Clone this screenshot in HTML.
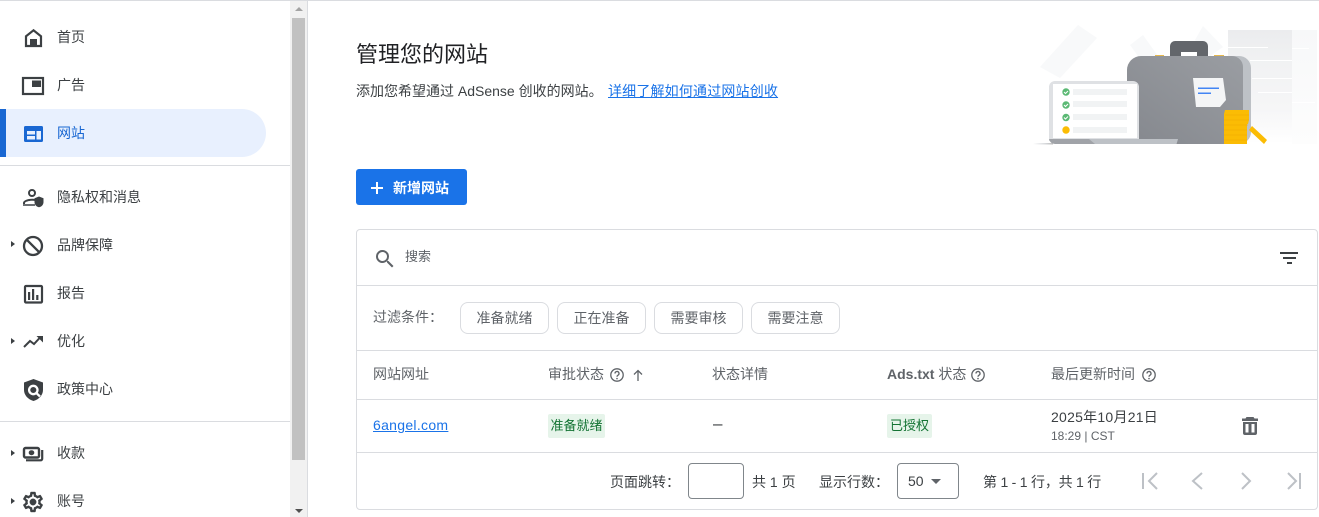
<!DOCTYPE html>
<html lang="zh"><head><meta charset="utf-8"><title>网站</title>
<style>
html,body{margin:0;padding:0;background:#fff}
body{width:1319px;height:517px;overflow:hidden;position:relative;font-family:"Liberation Sans","Noto Sans CJK SC",sans-serif;color:#3c4043;font-size:14px}
.a{position:absolute;white-space:nowrap}
.nav{left:57px;font-size:14px;line-height:20px;color:#3c4043}
.hl{background:#dadce0}
svg{position:absolute;overflow:visible}
.chip{position:absolute;top:302px;height:32px;box-sizing:border-box;border:1px solid #dadce0;border-radius:8px;font-size:14px;line-height:30px;text-align:center;color:#5f6368}
.th{top:364px;line-height:20px;font-size:14px;color:#5f6368}
.p{top:472px;font-size:14px;line-height:20px;color:#3c4043}
.tri{position:absolute;left:11px;width:0;height:0;border-left:4px solid #3c4043;border-top:3.5px solid transparent;border-bottom:3.5px solid transparent}
</style></head><body>
<div class="a hl" style="left:0;top:0;width:1319px;height:1px"></div>

<!-- sidebar -->
<div class="a" style="left:0;top:109px;width:266px;height:48px;background:#e8f0fe;border-radius:0 24px 24px 0"></div>
<div class="a" style="left:0;top:109px;width:6px;height:48px;background:#1967d2"></div>
<div class="a hl" style="left:0;top:165px;width:290px;height:1px"></div>
<div class="a hl" style="left:0;top:421px;width:290px;height:1px"></div>
<div class="a" style="left:290px;top:1px;width:17px;height:516px;background:#f1f1f1"></div>
<div class="a" style="left:292px;top:18px;width:13px;height:442px;background:#c1c1c1"></div>
<div class="a" style="left:307px;top:0;width:1px;height:517px;background:#dadce0"></div>
<div class="a" style="left:295px;top:7px;width:0;height:0;border-left:4px solid transparent;border-right:4px solid transparent;border-bottom:4px solid #a3a3a3"></div>
<div class="a" style="left:295px;top:509px;width:0;height:0;border-left:4px solid transparent;border-right:4px solid transparent;border-top:4px solid #505050"></div>

<svg style="left:21px;top:25px" width="24" height="24" viewBox="0 0 24 24"><path d="M12.500 5.300 5 11.300V21h15v-9.700z" fill="none" stroke="#3c4043" stroke-width="2.200"/><rect x="9" y="14" width="7" height="7" fill="#3c4043"/></svg>
<svg style="left:21px;top:73px" width="24" height="24" viewBox="0 0 24 24"><rect x="2" y="5" width="20" height="16" fill="none" stroke="#3c4043" stroke-width="2.200"/><rect x="11" y="7.500" width="9" height="6.500" fill="#3c4043"/></svg>
<svg style="left:21px;top:121px" width="24" height="24" viewBox="0 0 24 24" fill="#1967d2"><path fill-rule="evenodd" d="M4.500 5h16A1.500 1.500 0 0 1 22 6.500v13a1.500 1.500 0 0 1-1.500 1.500h-16A1.500 1.500 0 0 1 3 19.500v-13A1.500 1.500 0 0 1 4.500 5zM6 10v3.500h8V10zM6 15v3.500h8V15zM15.500 10v8.500H20V10z"/></svg>
<svg style="left:21px;top:185px" width="24" height="24" viewBox="0 0 24 24" fill="#3c4043"><circle cx="11" cy="8" r="3" fill="none" stroke="#3c4043" stroke-width="2"/><path d="M2 21v-3c0-2.800 5-4.300 9-4.300 1 0 1.700.1 2.500.2v2c-.8-.1-1.500-.2-2.500-.2-3 0-7 1.100-7 2.300v1z"/><rect x="2" y="19" width="12" height="2" fill="#6b6e72"/><path d="M18 11.500 13.500 13.200V17c0 2.800 1.900 4.700 4.500 5.300 2.600-.6 4.500-2.500 4.500-5.300v-3.800z"/></svg>
<div class="tri" style="top:241px"></div>
<svg style="left:21px;top:234px" width="24" height="24" viewBox="0 0 24 24"><circle cx="12" cy="12" r="9" fill="none" stroke="#3c4043" stroke-width="2.300"/><path d="M5.800 5.800 18.200 18.200" stroke="#3c4043" stroke-width="2.300"/></svg>
<svg style="left:21px;top:282px" width="24" height="24" viewBox="0 0 24 24" fill="#3c4043"><rect x="4" y="4" width="17" height="16.500" rx="1" fill="none" stroke="#3c4043" stroke-width="2.200"/><rect x="7" y="10" width="2.200" height="8"/><rect x="11" y="7" width="2.200" height="11"/><rect x="15.200" y="13" width="2.200" height="5"/></svg>
<div class="tri" style="top:338px"></div>
<svg style="left:21px;top:329px" width="24" height="24" viewBox="0 0 24 24"><path d="M3 18 9 12l4 3 6.500-7" fill="none" stroke="#3c4043" stroke-width="2"/><path d="M15.500 7H22v6.500z" fill="#3c4043"/></svg>
<svg style="left:21px;top:377px" width="24" height="24" viewBox="0 0 24 24"><path d="M12.500 2 3 5.500V13c0 5 4 9.500 9.500 11 5.500-1.500 9.500-6 9.500-11V5.500z" fill="#3c4043"/><circle cx="12.300" cy="13" r="4.200" fill="#3c4043" stroke="#fff" stroke-width="2.300"/><path d="M15.500 16.200 19 19.500" stroke="#fff" stroke-width="2.300"/></svg>
<div class="tri" style="top:450px"></div>
<svg style="left:21px;top:441px" width="24" height="24" viewBox="0 0 24 24"><rect x="3" y="7" width="15" height="9.500" rx="1.500" fill="none" stroke="#3c4043" stroke-width="2.400"/><ellipse cx="10.500" cy="11.700" rx="2.800" ry="2.500" fill="#3c4043"/><path d="M21.200 9v8.800a1.500 1.500 0 0 1-1.500 1.500H5" fill="none" stroke="#3c4043" stroke-width="2.200"/></svg>
<div class="tri" style="top:498px"></div>
<svg style="left:21px;top:490px" width="24" height="24" viewBox="0 0 24 24" fill="#3c4043" stroke="#3c4043" stroke-width=".4"><path d="M19.430 12.980c.04-.32.07-.64.07-.98 0-.34-.03-.66-.07-.98l2.110-1.650c.19-.15.24-.42.12-.64l-2-3.460c-.09-.16-.26-.25-.44-.25-.06 0-.12.01-.17.03l-2.490 1c-.52-.4-1.080-.73-1.690-.98l-.38-2.650C14.460 2.180 14.250 2 14 2h-4c-.25 0-.46.18-.49.42l-.38 2.650c-.61.25-1.170.59-1.690.98l-2.490-1c-.06-.02-.12-.03-.18-.03-.17 0-.34.09-.43.25l-2 3.460c-.13.22-.07.49.12.64l2.110 1.650c-.04.32-.07.65-.07.98 0 .33.03.66.07.98l-2.110 1.650c-.19.15-.24.42-.12.64l2 3.460c.09.16.26.25.44.25.06 0 .12-.01.17-.03l2.490-1c.52.4 1.080.73 1.690.98l.38 2.650c.03.24.24.42.49.42h4c.25 0 .46-.18.49-.42l.38-2.650c.61-.25 1.170-.59 1.690-.98l2.490 1c.06.02.12.03.18.03.17 0 .34-.09.43-.25l2-3.460c.12-.22.07-.49-.12-.64l-2.110-1.650zm-1.980-1.710c.04.31.05.52.05.73 0 .21-.02.43-.05.73l-.14 1.130.89.7 1.080.84-.7 1.210-1.270-.51-1.040-.42-.9.68c-.43.32-.84.56-1.250.73l-1.060.43-.16 1.130-.2 1.350h-1.400l-.19-1.350-.16-1.130-1.060-.43c-.43-.18-.83-.41-1.230-.71l-.91-.7-1.060.43-1.270.51-.7-1.210 1.080-.84.89-.7-.14-1.130c-.03-.31-.05-.54-.05-.74s.02-.43.05-.73l.14-1.130-.89-.7-1.080-.84.7-1.210 1.270.51 1.040.42.9-.68c.43-.32.84-.56 1.250-.73l1.060-.43.16-1.130.2-1.350h1.390l.19 1.350.16 1.130 1.060.43c.43.18.83.41 1.230.71l.91.7 1.060-.43 1.270-.51.7 1.210-1.070.85-.89.7.14 1.130z"/><circle cx="12" cy="12" r="3.200"/></svg>

<div class="a nav" style="top:27px">首页</div>
<div class="a nav" style="top:75px">广告</div>
<div class="a nav" style="top:123px;color:#1967d2">网站</div>
<div class="a nav" style="top:187px">隐私权和消息</div>
<div class="a nav" style="top:235px">品牌保障</div>
<div class="a nav" style="top:283px">报告</div>
<div class="a nav" style="top:331px">优化</div>
<div class="a nav" style="top:379px">政策中心</div>
<div class="a nav" style="top:443px">收款</div>
<div class="a nav" style="top:491px">账号</div>

<!-- header -->
<div class="a" style="left:356px;top:39px;font-size:22px;line-height:32px;color:#202124">管理您的网站</div>
<div class="a" style="left:356px;top:81px;font-size:14px;line-height:20px;color:#3c4043">添加您希望通过 AdSense 创收的网站。</div>
<div class="a" style="left:608px;top:81px;font-size:14px;line-height:20px;letter-spacing:.17px;color:#1a73e8;text-decoration:underline">详细了解如何通过网站创收</div>

<!-- illustration -->
<svg style="left:1020px;top:10px" width="299" height="150" viewBox="0 0 299 150">
<defs>
<linearGradient id="f" x1="0" y1="0" x2="0" y2="1"><stop offset="0" stop-color="#ebecee"/><stop offset=".3" stop-color="#f1f2f3"/><stop offset=".7" stop-color="#f6f6f7"/><stop offset="1" stop-color="#fff"/></linearGradient>
<linearGradient id="g" x1="0" y1="0" x2="0" y2="1"><stop offset="0" stop-color="#f7f8f9"/><stop offset="1" stop-color="#fdfdfd"/></linearGradient>
<linearGradient id="b" x1="0" y1="1" x2="1" y2="0"><stop offset="0" stop-color="#85888e"/><stop offset="1" stop-color="#9a9da2"/></linearGradient>
<linearGradient id="s" x1="0" y1="0" x2="1" y2="0"><stop offset="0" stop-color="#fff"/><stop offset=".6" stop-color="#d8dadd"/><stop offset="1" stop-color="#bbb"/></linearGradient>
</defs>
<path d="M20 57 58 15 77 28 40 68z" fill="#f8f9fa"/>
<path d="M110 35 123 25 138 46 118 46z" fill="#f8f9fa"/>
<path d="M175 30 183 16 203 37 190 46z" fill="#f8f9fa"/>
<rect x="208" y="20" width="64" height="114" fill="url(#f)"/>
<rect x="272" y="20" width="25" height="114" fill="url(#g)"/>
<g fill="#fff"><rect x="208" y="37" width="40" height="1"/><rect x="230" y="50" width="42" height="1"/><rect x="232" y="68" width="40" height="1"/><rect x="238" y="82" width="34" height="1"/><rect x="272" y="38" width="17" height="1"/><rect x="272" y="92" width="23" height="1"/></g>
<rect x="13" y="133" width="20" height="1.500" fill="url(#s)"/>
<rect x="135" y="45" width="9" height="3" fill="#e6b84d"/><rect x="194" y="45" width="10" height="3" fill="#e6b84d"/>
<path d="M150 46V36a5 5 0 0 1 5-5h28a5 5 0 0 1 5 5v10h-11v-4h-16v4z" fill="#63666b"/>
<path d="M210 46h9a12 12 0 0 1 12 12v64a12 12 0 0 1-12 12h-9z" fill="#bdc1c6"/>
<path d="M121 46h91a11 11 0 0 1 11 11v66a11 11 0 0 1-11 11H121a14 14 0 0 1-14-14V60a14 14 0 0 1 14-14z" fill="url(#b)"/>
<path d="M173 68h30l3 22-6 7-24 0z" fill="#f4f5f6"/>
<rect x="178" y="77.500" width="21" height="1.500" fill="#4285f4"/><rect x="178" y="82.500" width="13" height="1.500" fill="#4285f4"/>
<path d="M35 71h78a6 6 0 0 1 6 6v54H29V77a6 6 0 0 1 6-6z" fill="#dfe1e4"/><rect x="33" y="74" width="84" height="54" fill="#fff"/>
<path d="M29 129h129l-1.500 5H35a6 6 0 0 1-6-5z" fill="#a0a3a8"/><path d="M69 129h89l-1.500 5H75z" fill="#bdc1c6"/>
<g fill="#f1f3f4"><rect x="53" y="79" width="54" height="6"/><rect x="53" y="91" width="54" height="6"/><rect x="53" y="104" width="54" height="6"/><rect x="53" y="117" width="54" height="6"/></g>
<g fill="#5bb974"><circle cx="46" cy="82" r="3.700"/><circle cx="46" cy="95" r="3.700"/><circle cx="46" cy="107.500" r="3.700"/></g>
<g fill="none" stroke="#fff" stroke-width="1"><path d="M44 82l1.500 1.500 2.500-2.500"/><path d="M44 95l1.500 1.500 2.500-2.500"/><path d="M44 107.500l1.500 1.500 2.500-2.500"/></g>
<circle cx="46" cy="120" r="3.700" fill="#fbbc04"/>
<path d="M205 100h24v10l-1 4h-1v20h-23v-30z" fill="#fbbc04"/>
<g stroke="#f0a800" stroke-width=".6"><path d="M205 105h24M204 110h25M204 115h24M204 120h23M204 125h23M204 130h23"/></g>
<path d="M232 116 247 130 244 134 229 120z" fill="#fbbc04"/>
</svg>

<!-- button -->
<div class="a" style="left:356px;top:169px;width:111px;height:36px;background:#1a73e8;border-radius:3px"></div>
<svg style="left:368px;top:179px" width="18" height="18" viewBox="0 0 18 18"><path d="M9 3v12M3 9h12" stroke="#fff" stroke-width="2"/></svg>
<div class="a" style="left:393px;top:178px;font-size:14px;line-height:20px;color:#fff;font-weight:700">新增网站</div>

<!-- card -->
<div class="a" style="left:356px;top:229px;width:962px;height:281px;box-sizing:border-box;border:1px solid #dadce0;border-radius:4px"></div>
<div class="a hl" style="left:357px;top:285px;width:960px;height:1px"></div>
<div class="a hl" style="left:357px;top:350px;width:960px;height:1px"></div>
<div class="a hl" style="left:357px;top:399px;width:960px;height:1px"></div>
<div class="a hl" style="left:357px;top:452px;width:960px;height:1px"></div>

<svg style="left:373px;top:247px" width="24" height="24" viewBox="0 0 24 24" fill="#5f6368"><path d="M15.500 14h-.79l-.28-.27A6.470 6.470 0 0 0 16 9.500 6.500 6.500 0 1 0 9.500 16c1.610 0 3.090-.59 4.230-1.570l.27.28v.79l5 4.990L20.490 19l-4.990-5zm-6 0C7.010 14 5 11.990 5 9.500S7.010 5 9.500 5 14 7.010 14 9.500 11.990 14 9.500 14z"/></svg>
<div class="a" style="left:405px;top:247px;font-size:13px;line-height:20px;color:#5f6368">搜索</div>
<svg style="left:1278px;top:246px" width="24" height="24" viewBox="0 0 24 24"><path d="M2 6h18v2H2zM5 11h13v2H5zM9 16h5v2H9z" fill="#3c4043"/></svg>

<div class="a" style="left:373px;top:307px;font-size:14px;line-height:20px;color:#5f6368">过滤条件：</div>
<div class="chip" style="left:460px;width:89px">准备就绪</div>
<div class="chip" style="left:557px;width:89px">正在准备</div>
<div class="chip" style="left:654px;width:89px">需要审核</div>
<div class="chip" style="left:751px;width:89px">需要注意</div>

<div class="a th" style="left:373px">网站网址</div>
<div class="a th" style="left:548px">审批状态</div>
<svg style="left:609px;top:367px" width="16" height="16" viewBox="0 0 16 16"><circle cx="8" cy="8" r="6.200" fill="none" stroke="#5f6368" stroke-width="1.300"/><path d="M6 6.500a2 2 0 1 1 3 1.700c-.7.400-1 .8-1 1.600" fill="none" stroke="#5f6368" stroke-width="1.300"/><circle cx="8" cy="11.600" r=".8" fill="#5f6368"/></svg>
<svg style="left:631px;top:368px" width="14" height="14" viewBox="0 0 14 14"><path d="M7 13V3M3 6.500l4-4 4 4" fill="none" stroke="#5f6368" stroke-width="1.300"/></svg>
<div class="a th" style="left:712px">状态详情</div>
<div class="a th" style="left:887px"><b style="font-weight:700">Ads.txt</b> 状态</div>
<svg style="left:970px;top:367px" width="16" height="16" viewBox="0 0 16 16"><circle cx="8" cy="8" r="6.200" fill="none" stroke="#5f6368" stroke-width="1.300"/><path d="M6 6.500a2 2 0 1 1 3 1.700c-.7.400-1 .8-1 1.600" fill="none" stroke="#5f6368" stroke-width="1.300"/><circle cx="8" cy="11.600" r=".8" fill="#5f6368"/></svg>
<div class="a th" style="left:1051px">最后更新时间</div>
<svg style="left:1141px;top:367px" width="16" height="16" viewBox="0 0 16 16"><circle cx="8" cy="8" r="6.200" fill="none" stroke="#5f6368" stroke-width="1.300"/><path d="M6 6.500a2 2 0 1 1 3 1.700c-.7.400-1 .8-1 1.600" fill="none" stroke="#5f6368" stroke-width="1.300"/><circle cx="8" cy="11.600" r=".8" fill="#5f6368"/></svg>

<div class="a" style="left:373px;top:415px;font-size:14px;line-height:20px;letter-spacing:.3px;color:#1a73e8;text-decoration:underline">6angel.com</div>
<div class="a" style="left:548px;top:414px;width:57px;height:24px;background:#e6f4ea;border-radius:2px;font-size:13px;line-height:24px;text-align:center;color:#137333">准备就绪</div>
<div class="a" style="left:713px;top:414px;font-size:17px;line-height:20px;color:#3c4043">–</div>
<div class="a" style="left:887px;top:414px;width:45px;height:24px;background:#e6f4ea;border-radius:2px;font-size:13px;line-height:24px;text-align:center;color:#137333">已授权</div>
<div class="a" style="left:1051px;top:407px;font-size:14px;line-height:20px;letter-spacing:.25px;color:#3c4043">2025年10月21日</div>
<div class="a" style="left:1051px;top:427px;font-size:12px;line-height:18px;color:#5f6368">18:29 | CST</div>
<svg style="left:1238px;top:414px" width="24" height="24" viewBox="0 0 24 24" fill="#5f6368"><path fill-rule="evenodd" d="M8.500 3h7l1 1.500H20V7H4V4.500h3.500zM5 8h14v11a2 2 0 0 1-2 2H7a2 2 0 0 1-2-2zM7.500 10v8.500h3V10zM13.500 10v8.500h3V10z"/></svg>

<div class="a p" style="left:610px">页面跳转：</div>
<div class="a" style="left:688px;top:463px;width:56px;height:36px;box-sizing:border-box;border:1px solid #80868b;border-radius:4px"></div>
<div class="a p" style="left:752px">共 1 页</div>
<div class="a p" style="left:819px">显示行数：</div>
<div class="a" style="left:897px;top:463px;width:62px;height:36px;box-sizing:border-box;border:1px solid #80868b;border-radius:4px"></div>
<div class="a" style="left:908px;top:471px;font-size:14px;line-height:20px;color:#3c4043">50</div>
<div class="a" style="left:931px;top:479px;width:0;height:0;border-left:5px solid transparent;border-right:5px solid transparent;border-top:5px solid #5f6368"></div>
<div class="a p" style="left:983px;letter-spacing:-.22px">第 1 - 1 行，共 1 行</div>
<svg style="left:1137px;top:469px" width="170" height="24" viewBox="0 0 170 24" fill="none" stroke="#bdc1c6" stroke-width="2"><path d="M6 4v16M20 4l-8 8 8 8"/><path d="M65 4l-9 8 9 8"/><path d="M105 4l8 8-8 8"/><path d="M151 4l8 8-8 8M163 4v16"/></svg>
</body></html>
